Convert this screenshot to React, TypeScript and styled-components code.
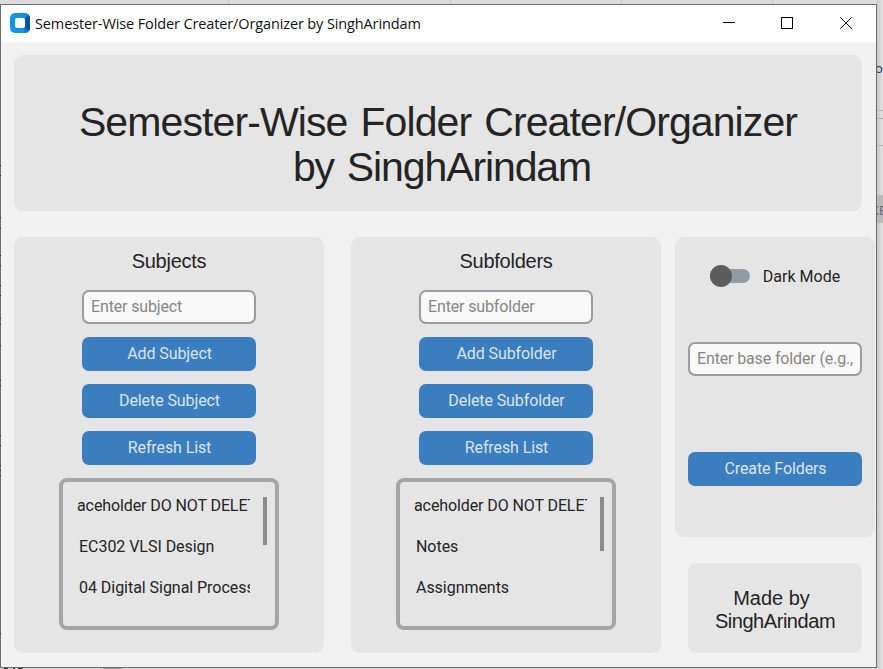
import React from "react";
import styled, { createGlobalStyle } from "styled-components";

const GlobalStyle = createGlobalStyle`
  * { box-sizing: border-box; }
  html, body { margin: 0; padding: 0; overflow: hidden; }
  body { font-family: Roboto, sans-serif; font-size: 16px; color: #242424; }
`;

const Desktop = styled.div`
  position: relative;
  width: 883px;
  height: 669px;
  padding-top: 4px;
  overflow: hidden;
  background: linear-gradient(90deg, #dcdcdc 0, #dcdcdc 876px, #c9c9c9 877px, #e3e3e4 883px);
`;

const DesktopEdge = styled.div<{ $x: number; $y: number; $w: number; $h: number; $color: string }>`
  position: absolute;
  left: ${(p) => p.$x}px;
  top: ${(p) => p.$y}px;
  width: ${(p) => p.$w}px;
  height: ${(p) => p.$h}px;
  background: ${(p) => p.$color};
`;

const DesktopLetter = styled.span<{ $top: number; $left: number; $color: string }>`
  position: absolute;
  left: ${(p) => p.$left}px;
  top: ${(p) => p.$top}px;
  font: 13px/16px "Open Sans", sans-serif;
  color: ${(p) => p.$color};
  white-space: nowrap;
`;

const Window = styled.main`
  position: relative;
  width: 877px;
  height: 664px;
  border: 1px solid #6d6d6d;
  background: #f1f1f1;
`;

const TitleBar = styled.header`
  display: flex;
  align-items: center;
  height: 37px;
  padding: 0 0 1px 9px;
  background: #fff;
`;

const WindowTitle = styled.span`
  flex: 1;
  margin-left: 5px;
  padding-top: 1px;
  font-family: "Open Sans", "Noto Sans", sans-serif;
  font-size: 14.5px;
  letter-spacing: -0.12px;
  line-height: 20px;
  color: #111;
  white-space: nowrap;
`;

const WindowControls = styled.div`
  display: grid;
  grid-template-columns: 58px 59px 12px;
  align-items: center;
  margin-right: 24px;
`;

const Content = styled.div`
  display: grid;
  grid-template-columns: 310px 310px 200px;
  column-gap: 27px;
  row-gap: 26px;
  padding: 13px 0 0 13px;
`;

const Panel = styled.section`
  border-radius: 9px;
  background: #e5e5e5;
`;

const Banner = styled(Panel)`
  grid-column: 1 / -1;
  display: flex;
  justify-content: center;
  width: 848px;
  height: 156px;
  padding-top: 45px;
`;

const BannerTitle = styled.h1`
  margin: 0;
  font: 400 41px/45px "Liberation Sans", Arial, sans-serif;
  text-align: center;
`;

const BannerLine = styled.span<{ $tracking: number; $indent?: number }>`
  display: block;
  padding-left: ${(p) => p.$indent ?? 0}px;
  letter-spacing: ${(p) => p.$tracking}px;
  word-spacing: 2.5px;
`;

const ListPanel = styled(Panel)`
  display: flex;
  flex-direction: column;
  align-items: center;
  gap: 13px;
  height: 416px;
  padding-top: 13px;
`;

const PanelTitle = styled.h2`
  margin: 0 0 4px;
  font: 400 20px/23px "Liberation Sans", Arial, sans-serif;
  letter-spacing: -0.25px;
`;

const Entry = styled.input`
  display: block;
  width: 174px;
  height: 34px;
  padding: 0 6px 2px 7px;
  border: 2px solid #979da2;
  border-radius: 7px;
  outline: 0;
  background: #f9f9fa;
  font: 16px Roboto, sans-serif;
  letter-spacing: -0.14px;
  color: #242424;
  &::placeholder { color: #868686; opacity: 1; }
`;

const Button = styled.button`
  display: block;
  width: 174px;
  height: 34px;
  padding: 0 0 1px 1px;
  border: 0;
  border-radius: 7px;
  background: #3b7ebf;
  color: #dce4ee;
  font: 16px Roboto, sans-serif;
  letter-spacing: -0.1px;
`;

const ListBox = styled.div`
  display: flex;
  justify-content: space-between;
  width: 220px;
  height: 152px;
  padding: 3px 8px 0 14px;
  border: 4px solid #a5a5a5;
  border-radius: 8px;
`;

const Items = styled.ul`
  width: 173px;
  margin: 0;
  padding: 0;
  overflow: hidden;
  list-style: none;
`;

const Item = styled.li<{ $clipped?: boolean }>`
  height: 41px;
  margin-left: ${(p) => (p.$clipped ? "0" : "2px")};
  line-height: 41px;
  letter-spacing: ${(p) => (p.$clipped ? "-0.1px" : "-0.04px")};
  white-space: nowrap;
`;

const ScrollThumb = styled.div<{ $height: number }>`
  width: 4px;
  height: ${(p) => p.$height}px;
  margin-top: 12px;
  background: #8b8b8b;
`;

const SideColumn = styled.aside`
  display: flex;
  flex-direction: column;
  gap: 26px;
  margin-left: -13px;
  width: 200px;
`;

const OptionsPanel = styled(Panel)`
  display: flex;
  flex-direction: column;
  align-items: center;
  height: 300px;
  padding-top: 27px;
`;

const SwitchRow = styled.label`
  display: flex;
  align-items: center;
  gap: 13px;
  height: 24px;
  margin-bottom: 54px;
`;

const SwitchTrack = styled.span`
  display: flex;
  align-items: center;
  width: 40px;
  height: 14px;
  border-radius: 7px;
  background: #939ba2;
`;

const SwitchKnob = styled.span`
  width: 22px;
  height: 22px;
  flex: none;
  border-radius: 50%;
  background: #5c5c5c;
`;

const CreateButton = styled(Button)`
  margin-top: 76px;
`;

const Credit = styled(Panel)`
  width: 174px;
  height: 90px;
  margin-left: 13px;
  padding-top: 24px;
  font: 20px/23px "Liberation Sans", Arial, sans-serif;
  text-align: center;
`;

const CreditLine = styled.div<{ $shift: number; $tracking: number }>`
  margin-left: ${(p) => p.$shift}px;
  letter-spacing: ${(p) => p.$tracking}px;
`;

const AppIcon = () => (
  <svg width="20" height="20" viewBox="0 0 20 20">
    <rect width="20" height="20" rx="5" fill="#1193ea" />
    <path d="M15 5l3.5-3.5Q20 3 20 5v10q0 2-1.5 3.5L15 15z" fill="#0754a0" />
    <path d="M13 15h2l3.5 3.5Q17 20 15 20z" fill="#137ed0" />
    <rect x="5" y="5" width="10" height="10" rx="2" fill="#fff" />
  </svg>
);

const stroke = { fill: "none", stroke: "#000", strokeWidth: 1 };

const MinimizeIcon = () => (
  <svg width="12" height="12" {...stroke}><path d="M0 5.5h12" /></svg>
);
const MaximizeIcon = () => (
  <svg width="12" height="12" {...stroke}><rect x=".5" y=".5" width="11" height="11" /></svg>
);
const CloseIcon = () => (
  <svg width="12" height="12" {...stroke}><path d="M.3.3l11.4 11.4M11.7.3L.3 11.7" /></svg>
);

type ListEntry = { text: string; clipped?: boolean };
type FolderListProps = { title: string; kind: string; items: ListEntry[]; thumb: number };

const FolderList = ({ title, kind, items, thumb }: FolderListProps) => (
  <ListPanel>
    <PanelTitle>{title}</PanelTitle>
    <Entry placeholder={`Enter ${kind.toLowerCase()}`} />
    <Button>Add {kind}</Button>
    <Button>Delete {kind}</Button>
    <Button>Refresh List</Button>
    <ListBox>
      <Items>
        {items.map((item) => (
          <Item key={item.text} $clipped={item.clipped}>{item.text}</Item>
        ))}
      </Items>
      <ScrollThumb $height={thumb} />
    </ListBox>
  </ListPanel>
);

const placeholder: ListEntry = { text: "aceholder DO NOT DELETE", clipped: true };
const subjects: ListEntry[] = [placeholder, { text: "EC302 VLSI Design" }, { text: "04 Digital Signal Processing" }];
const subfolders: ListEntry[] = [placeholder, { text: "Notes" }, { text: "Assignments" }];

const edgeMarks = [165, 175, 217, 228, 255, 265, 285, 295, 318, 324, 345, 380, 385, 435, 445, 465, 470, 475, 633];

export default function App() {
  return (
    <Desktop>
      <GlobalStyle />
      {[228, 450, 621, 772].map((x) => (
        <DesktopEdge key={x} $x={x} $y={0} $w={1} $h={4} $color="#c4c4c4" />
      ))}
      <DesktopEdge $x={877} $y={110} $w={6} $h={1} $color="#b8b8b8" />
      <DesktopEdge $x={877} $y={118} $w={6} $h={1} $color="#b0b0b0" />
      <DesktopEdge $x={877} $y={145} $w={6} $h={1} $color="#b8b8b8" />
      <DesktopEdge $x={877} $y={195} $w={6} $h={28} $color="#b9b9b9" />
      <DesktopLetter $left={875} $top={60} $color="#333">o</DesktopLetter>
      <DesktopLetter $left={871} $top={202} $color="#666">KE</DesktopLetter>
      <Window>
        <TitleBar>
          <AppIcon />
          <WindowTitle>Semester-Wise Folder Creater/Organizer by SinghArindam</WindowTitle>
          <WindowControls>
            <MinimizeIcon />
            <MaximizeIcon />
            <CloseIcon />
          </WindowControls>
        </TitleBar>
        <Content>
          <Banner>
            <BannerTitle>
              <BannerLine $tracking={-0.9}>Semester-Wise Folder Creater/Organizer</BannerLine>
              <BannerLine $tracking={-1.1} $indent={8}>by SinghArindam</BannerLine>
            </BannerTitle>
          </Banner>
          <FolderList title="Subjects" kind="Subject" items={subjects} thumb={48} />
          <FolderList title="Subfolders" kind="Subfolder" items={subfolders} thumb={54} />
          <SideColumn>
            <OptionsPanel>
              <SwitchRow>
                <SwitchTrack><SwitchKnob /></SwitchTrack>
                Dark Mode
              </SwitchRow>
              <Entry placeholder="Enter base folder (e.g., D:/)" />
              <CreateButton>Create Folders</CreateButton>
            </OptionsPanel>
            <Credit>
              <CreditLine $shift={-7} $tracking={0}>Made by</CreditLine>
              <CreditLine $shift={0} $tracking={-0.45}>SinghArindam</CreditLine>
            </Credit>
          </SideColumn>
        </Content>
      </Window>
      {edgeMarks.map((y) => (
        <DesktopEdge key={y} $x={0} $y={y} $w={1} $h={1} $color="#222" />
      ))}
      <DesktopEdge $x={103} $y={668} $w={19} $h={1} $color="#9a9a9a" />
      <DesktopEdge $x={4} $y={668} $w={4} $h={1} $color="#222" />
      <DesktopEdge $x={13} $y={668} $w={2} $h={1} $color="#333" />
      <DesktopEdge $x={18} $y={668} $w={5} $h={1} $color="#444" />
    </Desktop>
  );
}
